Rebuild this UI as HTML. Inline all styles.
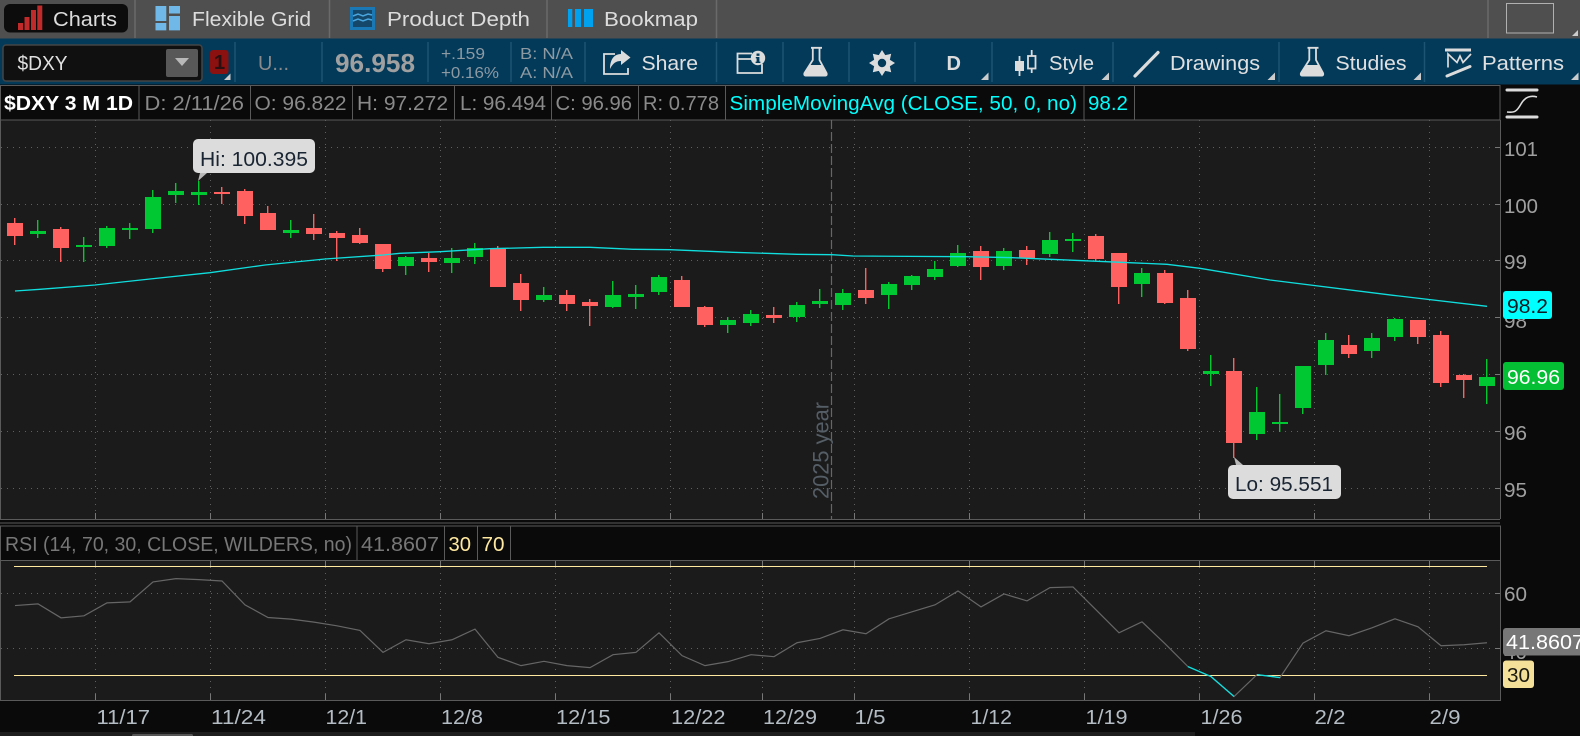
<!DOCTYPE html>
<html><head><meta charset="utf-8"><title>Charts</title>
<style>
html,body{margin:0;padding:0;background:#0a0a0a;width:1580px;height:736px;overflow:hidden}
svg{display:block}
text{font-family:"Liberation Sans",sans-serif;font-size:20px;white-space:pre}
.h{fill:#dcdcdc}
.t{fill:#e0e0e0}
.g{fill:#8a8a8a}
.a{fill:#a0a0a0}
.b{fill:#b4bcc4}
</style></head><body>
<svg width="1580" height="736" viewBox="0 0 1580 736" xmlns="http://www.w3.org/2000/svg">
<rect width="1580" height="736" fill="#0a0a0a"/>
<!-- top tabs -->
<rect width="1580" height="38.5" fill="#4f4f4f"/>
<path d="M135 0V38M329.5 0V38M547 0V38M716.5 0V38M1488 0V38" stroke="#6a6a6a" stroke-width="1.5"/>
<rect x="4" y="4" width="124" height="28.5" rx="6" fill="#0c0c0c"/>
<path fill="#c02a2a" d="M18 23h5v7h-5zM24.5 17h5v13h-5zM31 10h5v20h-5zM37.3 5.5h5v24.5h-5z"/>
<text class="h" x="53" y="26" textLength="64" lengthAdjust="spacingAndGlyphs">Charts</text>
<path fill="#70b8e8" d="M155.5 6h10.8v15h-10.8zM155.5 23h10.8v7.4h-10.8zM169 6h11v7.5h-11zM169 16h11v14.4h-11z"/>
<text class="h" x="192" y="26" textLength="119" lengthAdjust="spacingAndGlyphs">Flexible Grid</text>
<rect x="350" y="7" width="25" height="23" fill="#1a78b4"/>
<rect x="353" y="10" width="19" height="17" fill="#15476a"/>
<path d="M353 16l5-2 5 2 5-2 4 1M353 21l5-2 5 2 5-2 4 1" fill="none" stroke="#4aa6de" stroke-width="1.5"/>
<text class="h" x="387" y="26" textLength="143" lengthAdjust="spacingAndGlyphs">Product Depth</text>
<path fill="#00a2f0" d="M568 9h4.3v18h-4.3zM575 9h6v18h-6zM584 9h9v18h-9z"/>
<text class="h" x="604" y="26" textLength="94" lengthAdjust="spacingAndGlyphs">Bookmap</text>
<rect x="1506.5" y="3.5" width="47" height="29.5" fill="none" stroke="#b0b0b0" stroke-width="1"/>
<path fill="#ccc" d="M1572 36h6v-6z"/>
<!-- toolbar -->
<rect y="38.5" width="1580" height="46" fill="#033a5a"/>
<path d="M235 42V82M322 42V82M428 42V82M511 42V82M585 42V82M716.5 42V82M783 42V82M849 42V82M915 42V82M992 42V82M1113 42V82M1279 42V82M1424.5 42V82" stroke="#1d5373" stroke-width="1.5"/>
<rect x="3" y="45" width="199" height="36" rx="3" fill="#101010" stroke="#444" stroke-width="1.5"/>
<text class="t" x="17.5" y="70" textLength="50" lengthAdjust="spacingAndGlyphs">$DXY</text>
<rect x="166" y="49" width="32" height="28" rx="2" fill="#585858"/>
<path d="M175 58h14l-7 8z" fill="#b8b8b8"/>
<rect x="210" y="50" width="18.5" height="24" rx="3" fill="#8b1010"/>
<text x="214" y="69" fill="#2a1010" style="font-size:20px;font-weight:bold">1</text>
<path fill="#ccc" d="M224 80h6.5v-6.5z"/>
<text x="258" y="70" class="g" textLength="31" lengthAdjust="spacingAndGlyphs">U...</text>
<text x="335" y="72" style="font-size:26px;font-weight:bold" fill="#a0a0a0" textLength="80" lengthAdjust="spacingAndGlyphs">96.958</text>
<text x="441" y="59" style="font-size:16px" fill="#8e9aa2" textLength="44" lengthAdjust="spacingAndGlyphs">+.159</text>
<text x="441" y="78" style="font-size:16px" fill="#8e9aa2" textLength="58" lengthAdjust="spacingAndGlyphs">+0.16%</text>
<text x="520" y="59" style="font-size:16px" fill="#8e9aa2" textLength="53" lengthAdjust="spacingAndGlyphs">B: N/A</text>
<text x="520" y="78" style="font-size:16px" fill="#8e9aa2" textLength="53" lengthAdjust="spacingAndGlyphs">A: N/A</text>
<!-- share -->
<path d="M615 54H604V74H628V68" fill="none" stroke="#dcdcdc" stroke-width="1.8"/>
<path d="M630.5 57.5L621 50V54C613 54 610 61 610 69C613 63 616 61 621 61V65Z" fill="#dcdcdc"/>
<text class="t" x="641.5" y="70" textLength="56.5" lengthAdjust="spacingAndGlyphs">Share</text>
<!-- info window -->
<path d="M752 53.5H737.5V73H762V64M737.5 59H751" fill="none" stroke="#dcdcdc" stroke-width="1.8"/>
<circle cx="758" cy="58" r="7.2" fill="#dcdcdc"/>
<path d="M756.5 53.5h3v2.4h-3zM755.8 57h3.6v4.6h1v1.4h-4.8v-1.4h1v-3.2h-.8z" fill="#033a5a"/>
<!-- flask -->
<path d="M811 47.8h11M812.8 48V60L804.5 73Q803.5 75.5 806 75.5H825Q827.5 75.5 826.5 73L819.5 60V48" fill="none" stroke="#dcdcdc" stroke-width="1.8"/>
<path d="M809.5 65H821.8L827 74Q827.5 76.5 825 76.5H806Q803.5 76.5 804 74Z" fill="#dcdcdc"/>
<!-- gear -->
<polygon transform="translate(882,63)" fill="#dcdcdc" points="0,-13 3.25,-7.85 9.2,-9.2 7.85,-3.25 13,0 7.85,3.25 9.2,9.2 3.25,7.85 0,13 -3.25,7.85 -9.2,9.2 -7.85,3.25 -13,0 -7.85,-3.25 -9.2,-9.2 -3.25,-7.85"/>
<circle cx="882" cy="63" r="4.2" fill="#033a5a"/>
<text x="946.5" y="70" style="font-size:20px;font-weight:bold" fill="#dcdcdc">D</text>
<path fill="#ccc" d="M981 80h7.5v-7.5z"/>
<!-- style -->
<path d="M1019.5 56V76" stroke="#dcdcdc" stroke-width="1.8"/>
<rect x="1015" y="61" width="9" height="10" fill="#dcdcdc"/>
<path d="M1031.7 50V56M1031.7 68.5V73" stroke="#dcdcdc" stroke-width="1.8"/>
<rect x="1028" y="56" width="7.5" height="12.5" fill="none" stroke="#dcdcdc" stroke-width="1.8"/>
<text class="t" x="1049" y="70" textLength="45" lengthAdjust="spacingAndGlyphs">Style</text>
<path fill="#ccc" d="M1101.5 80h7.5v-7.5z"/>
<!-- drawings -->
<path d="M1135 76L1158 52.5" stroke="#dcdcdc" stroke-width="3.2" stroke-linecap="round"/>
<text class="t" x="1170" y="70" textLength="90" lengthAdjust="spacingAndGlyphs">Drawings</text>
<path fill="#ccc" d="M1267.5 80h7.5v-7.5z"/>
<!-- studies -->
<g transform="translate(496.5,0)">
<path d="M811 47.8h11M812.8 48V60L804.5 73Q803.5 75.5 806 75.5H825Q827.5 75.5 826.5 73L819.5 60V48" fill="none" stroke="#dcdcdc" stroke-width="1.8"/>
<path d="M809.5 65H821.8L827 74Q827.5 76.5 825 76.5H806Q803.5 76.5 804 74Z" fill="#dcdcdc"/>
</g>
<text class="t" x="1335.5" y="70" textLength="71" lengthAdjust="spacingAndGlyphs">Studies</text>
<path fill="#ccc" d="M1413.5 80h7.5v-7.5z"/>
<!-- patterns -->
<path d="M1445 50H1471" stroke="#dcdcdc" stroke-width="3"/>
<path d="M1448 67.5V54L1457 62.5L1460 56L1463 62.5L1471 54" fill="none" stroke="#dcdcdc" stroke-width="1.7"/>
<path d="M1447 76L1470 66.5" stroke="#dcdcdc" stroke-width="3" stroke-linecap="round"/>
<text class="t" x="1482" y="70" textLength="82" lengthAdjust="spacingAndGlyphs">Patterns</text>
<path fill="#ccc" d="M1571 80h7.5v-7.5z"/>
<!-- title row -->
<rect x="0.5" y="85.5" width="1499.5" height="34.5" fill="#0a0a0a" stroke="#5a5a5a"/>
<path d="M139 85V120M250.5 85V120M352.5 85V120M454.5 85V120M551.5 85V120M638.5 85V120M725.5 85V120M1084 85V120M1134.5 85V120" stroke="#5a5a5a"/>
<text x="4" y="110" style="font-size:20px;font-weight:bold" fill="#fff" textLength="129" lengthAdjust="spacingAndGlyphs">$DXY 3 M 1D</text>
<text class="g" x="144.5" y="110" textLength="99.5" lengthAdjust="spacingAndGlyphs">D: 2/11/26</text>
<text class="g" x="254.5" y="110" textLength="92" lengthAdjust="spacingAndGlyphs">O: 96.822</text>
<text class="g" x="357" y="110" textLength="91" lengthAdjust="spacingAndGlyphs">H: 97.272</text>
<text class="g" x="460" y="110" textLength="86" lengthAdjust="spacingAndGlyphs">L: 96.494</text>
<text class="g" x="555.5" y="110" textLength="76.5" lengthAdjust="spacingAndGlyphs">C: 96.96</text>
<text class="g" x="643" y="110" textLength="76" lengthAdjust="spacingAndGlyphs">R: 0.778</text>
<text x="729.5" y="110" fill="#00ffff" textLength="347.5" lengthAdjust="spacingAndGlyphs">SimpleMovingAvg (CLOSE, 50, 0, no)</text>
<text x="1088" y="110" fill="#00ffff" textLength="40" lengthAdjust="spacingAndGlyphs">98.2</text>
<path d="M1507 90H1537M1507 117H1537" stroke="#dcdcdc" stroke-width="3" stroke-linecap="round"/>
<path d="M1507 112C1515 113 1517 111 1521 104C1525 97 1530 95 1537 97" fill="none" stroke="#dcdcdc" stroke-width="1.6"/>
<!-- main chart -->
<rect x="1" y="120.5" width="1499" height="398.5" fill="#1b1b1b"/>
<path d="M.5 120V519M1500.5 120V519M0 519.5H1500M0 523H1500" stroke="#5a5a5a"/>
<g fill="none" stroke="#606060" stroke-width="1" stroke-dasharray="1 5">
<path d="M1 147.5H1495M1 204.5H1495M1 260.5H1495M1 317.5H1495M1 374.5H1495M1 431.5H1495M1 488.5H1495"/>
<path d="M95.5 120V513M210.5 120V513M325.5 120V513M440.5 120V513M555.5 120V513M670.5 120V513M762.5 120V513M854.5 120V513M969.5 120V513M1084.5 120V513M1199.5 120V513M1314.5 120V513M1429.5 120V513"/>
</g>
<path d="M95.5 513V519M210.5 513V519M325.5 513V519M440.5 513V519M555.5 513V519M670.5 513V519M762.5 513V519M854.5 513V519M969.5 513V519M1084.5 513V519M1199.5 513V519M1314.5 513V519M1429.5 513V519M1495 147.5H1500M1495 204.5H1500M1495 260.5H1500M1495 317.5H1500M1495 374.5H1500M1495 431.5H1500M1495 488.5H1500" stroke="#777" fill="none"/>
<path d="M831.5 120V519" stroke="#666" stroke-width="1.2" stroke-dasharray="9 3"/>
<text transform="translate(828.5,499) rotate(-90)" x="0" y="0" fill="#555e66" style="font-size:22px" textLength="97" lengthAdjust="spacingAndGlyphs">2025 year</text>
<!-- candles: wicks -->
<g transform="translate(-.3,0)" fill="none" stroke-width="1.4">
<path stroke="#00c832" d="M38 220V238M84 237V262M107 226V248M130 223V239M153 190V233M176 183V203M199 181V205M291 220V238M406 256V275M452 248V273M475 243V264M544 287V302M613 281V308M636 285V309M659 275V295M728 317V333M751 310V326M797 302V322M820 289V308M843 289V310M889 282V309M912 275V290M935 261V280M958 245V267M1004 248V270M1050 232V257M1073 233V252M1142 268V297M1211 355V386M1257 387V440M1280 394V432M1303 366V414M1326 333V375M1372 333V358M1395 318V341M1487 359V404"/>
<path stroke="#ff6060" d="M15 218V245M61 227V262M222 187V204M245 189V224M268 206V230M314 214V240M337 231V261M360 228V244M383 244V272M429 253V272M498 246V287M521 274V311M567 290V311M590 299V326M682 276V307M705 306V327M774 307V323M866 268V304M981 246V280M1027 246V265M1096 234V261M1119 253V304M1165 270V304M1188 290V351M1234 358V458M1349 335V358M1418 320V344M1441 331V387M1464 374V398"/>
</g>
<!-- candles: bodies -->
<path fill="#00c832" d="M30 231h16v3h-16zM76 245h16v2h-16zM99 228h16v18h-16zM122 228h16v2h-16zM145 197h16v32h-16zM168 191h16v4h-16zM191 192h16v3h-16zM283 230h16v3h-16zM398 257h16v9h-16zM444 258h16v5h-16zM467 248h16v9h-16zM536 295h16v5h-16zM605 295h16v12h-16zM628 294h16v3h-16zM651 277h16v15h-16zM720 320h16v5h-16zM743 314h16v9h-16zM789 305h16v12h-16zM812 301h16v3h-16zM835 293h16v12h-16zM881 284h16v11h-16zM904 276h16v9h-16zM927 269h16v8h-16zM950 253h16v13h-16zM996 251h16v15h-16zM1042 240h16v14h-16zM1065 239h16v2h-16zM1134 273h16v11h-16zM1203 371h16v3h-16zM1249 412h16v22h-16zM1272 422h16v2h-16zM1295 366h16v42h-16zM1318 340h16v25h-16zM1364 338h16v13h-16zM1387 319h16v18h-16zM1479 377h16v9h-16z"/>
<path fill="#ff6060" d="M7 223h16v13h-16zM53 229h16v19h-16zM214 192h16v2h-16zM237 191h16v25h-16zM260 213h16v17h-16zM306 228h16v6h-16zM329 233h16v5h-16zM352 235h16v8h-16zM375 244h16v25h-16zM421 258h16v4h-16zM490 249h16v38h-16zM513 283h16v17h-16zM559 295h16v9h-16zM582 302h16v4h-16zM674 280h16v27h-16zM697 307h16v18h-16zM766 315h16v3h-16zM858 290h16v8h-16zM973 251h16v16h-16zM1019 250h16v8h-16zM1088 236h16v23h-16zM1111 253h16v34h-16zM1157 273h16v30h-16zM1180 298h16v51h-16zM1226 371h16v72h-16zM1341 345h16v9h-16zM1410 320h16v17h-16zM1433 335h16v48h-16zM1456 375h16v5h-16z"/>
<!-- SMA -->
<polyline fill="none" stroke="#10dede" stroke-width="1.3" points="15,291 40,289.3 95,285 150,279 210,272.7 265,265 325,259 383,255 400,253.3 440,251.7 490,248.7 543,247.3 590,247.3 633,249.3 670,249.7 733,252.3 797,254.3 832,254.7 853,256 967,256.7 1013,257.7 1083,260.7 1167,264.3 1200,268.3 1270,280 1393,295.3 1487,306.3"/>
<!-- bubbles -->
<path d="M198 181L200 173H207Z" fill="#b8b8b8"/>
<rect x="193" y="139" width="122" height="34" rx="5" fill="#dcdcdc"/>
<text x="200" y="166" fill="#1a2533" textLength="108" lengthAdjust="spacingAndGlyphs">Hi: 100.395</text>
<path d="M1234 457L1236 465H1243Z" fill="#b8b8b8"/>
<rect x="1228" y="465" width="113" height="34" rx="5" fill="#dcdcdc"/>
<text x="1235" y="491" fill="#1a2533" textLength="98" lengthAdjust="spacingAndGlyphs">Lo: 95.551</text>
<!-- right axis -->
<text class="a" x="1504" y="156" textLength="34" lengthAdjust="spacingAndGlyphs">101</text>
<text class="a" x="1504" y="213" textLength="34" lengthAdjust="spacingAndGlyphs">100</text>
<text class="a" x="1504" y="269" textLength="23" lengthAdjust="spacingAndGlyphs">99</text>
<text class="a" x="1504" y="328" textLength="23" lengthAdjust="spacingAndGlyphs">98</text>
<text class="a" x="1504" y="440" textLength="23" lengthAdjust="spacingAndGlyphs">96</text>
<text class="a" x="1504" y="497" textLength="23" lengthAdjust="spacingAndGlyphs">95</text>
<rect x="1503" y="291" width="49" height="28" rx="3" fill="#00ffff"/>
<text x="1507" y="313" fill="#0a1a22" textLength="41" lengthAdjust="spacingAndGlyphs">98.2</text>
<rect x="1503" y="362" width="61" height="28" rx="3" fill="#04bf33"/>
<text x="1507" y="384" fill="#fff" textLength="53" lengthAdjust="spacingAndGlyphs">96.96</text>
<!-- RSI -->
<rect x=".5" y="526" width="1500" height="34.5" fill="#0a0a0a" stroke="#5a5a5a"/>
<path d="M357 526V560M444.5 526V560M477.5 526V560M510.5 526V560" stroke="#5a5a5a"/>
<text x="5" y="551" fill="#777" textLength="347" lengthAdjust="spacingAndGlyphs">RSI (14, 70, 30, CLOSE, WILDERS, no)</text>
<text x="361" y="551" fill="#777" textLength="78" lengthAdjust="spacingAndGlyphs">41.8607</text>
<text x="448.5" y="551" fill="#ffe9a0" textLength="22.5" lengthAdjust="spacingAndGlyphs">30</text>
<text x="481.5" y="551" fill="#ffe9a0" textLength="23" lengthAdjust="spacingAndGlyphs">70</text>
<rect x=".5" y="560.5" width="1500" height="140" fill="#1b1b1b" stroke="#5a5a5a"/>
<g fill="none" stroke="#606060" stroke-width="1" stroke-dasharray="1 5">
<path d="M1 593.5H1495M1 648.5H1495"/>
<path d="M95.5 561V694M210.5 561V694M325.5 561V694M440.5 561V694M555.5 561V694M670.5 561V694M762.5 561V694M854.5 561V694M969.5 561V694M1084.5 561V694M1199.5 561V694M1314.5 561V694M1429.5 561V694"/>
</g>
<path d="M95.5 694V700M210.5 694V700M325.5 694V700M440.5 694V700M555.5 694V700M670.5 694V700M762.5 694V700M854.5 694V700M969.5 694V700M1084.5 694V700M1199.5 694V700M1314.5 694V700M1429.5 694V700M95.5 561V566M210.5 561V566M325.5 561V566M440.5 561V566M555.5 561V566M670.5 561V566M762.5 561V566M854.5 561V566M969.5 561V566M1084.5 561V566M1199.5 561V566M1314.5 561V566M1429.5 561V566M1495 593.5H1500M1495 648.5H1500" stroke="#777" fill="none"/>
<path d="M14 566.5H1487M14 675.5H1487" stroke="#ffe9a0" stroke-width="1" fill="none"/>
<g transform="translate(0,515.9) scale(1,.332)">
<polyline fill="none" stroke="#666" stroke-width="1.2" vector-effect="non-scaling-stroke" points="15,270 38,265 61,307 84,301 107,262 130,259 153,199 176,189 199,192 222,196 245,268 268,306 291,311 314,320 337,331 360,345 383,411 406,373 429,385 452,373 475,341 498,426 521,451 544,438 567,451 590,457 613,418 636,411 659,352 682,421 705,451 728,439 751,418 774,424 797,382 820,369 843,343 866,355 889,310 912,289 935,268 958,226 981,274 1004,235 1027,256 1050,216 1073,214 1096,283 1119,352 1142,319 1165,385 1188,454 1211,484 1234,544 1257,478 1280,487 1303,383 1326,346 1349,361 1372,337 1395,310 1418,334 1441,391 1464,388 1487,382"/>
<polyline fill="none" stroke="#10e0e0" stroke-width="1.3" vector-effect="non-scaling-stroke" points="1188,454 1211,484 1234,544"/>
<polyline fill="none" stroke="#10e0e0" stroke-width="1.3" vector-effect="non-scaling-stroke" points="1257,478 1280,487"/>
</g>
<text class="a" x="1504" y="601" textLength="23" lengthAdjust="spacingAndGlyphs">60</text>
<text class="a" x="1504" y="659" textLength="23" lengthAdjust="spacingAndGlyphs">40</text>
<rect x="1503" y="628" width="90" height="27.5" rx="3" fill="#777"/>
<text x="1506" y="649" fill="#fff" textLength="78" lengthAdjust="spacingAndGlyphs">41.8607</text>
<rect x="1503" y="660.5" width="31" height="27.5" rx="3" fill="#f5e09a"/>
<text x="1507" y="682" fill="#1a1a10" textLength="23" lengthAdjust="spacingAndGlyphs">30</text>
<!-- x axis -->
<text class="b" x="96.5" y="724" textLength="53.5" lengthAdjust="spacingAndGlyphs">11/17</text>
<text class="b" x="211" y="724" textLength="55" lengthAdjust="spacingAndGlyphs">11/24</text>
<text class="b" x="325.5" y="724" textLength="41.5" lengthAdjust="spacingAndGlyphs">12/1</text>
<text class="b" x="441" y="724" textLength="42" lengthAdjust="spacingAndGlyphs">12/8</text>
<text class="b" x="556" y="724" textLength="54.5" lengthAdjust="spacingAndGlyphs">12/15</text>
<text class="b" x="671" y="724" textLength="54.5" lengthAdjust="spacingAndGlyphs">12/22</text>
<text class="b" x="763" y="724" textLength="54" lengthAdjust="spacingAndGlyphs">12/29</text>
<text class="b" x="854.5" y="724" textLength="31" lengthAdjust="spacingAndGlyphs">1/5</text>
<text class="b" x="970.5" y="724" textLength="41.5" lengthAdjust="spacingAndGlyphs">1/12</text>
<text class="b" x="1085.5" y="724" textLength="42" lengthAdjust="spacingAndGlyphs">1/19</text>
<text class="b" x="1200.5" y="724" textLength="42" lengthAdjust="spacingAndGlyphs">1/26</text>
<text class="b" x="1314.5" y="724" textLength="31" lengthAdjust="spacingAndGlyphs">2/2</text>
<text class="b" x="1429.5" y="724" textLength="31" lengthAdjust="spacingAndGlyphs">2/9</text>
<rect x="0" y="732" width="1195" height="4" fill="#1e1e1e"/>
<rect x="132" y="734" width="61" height="3" rx="1.5" fill="#555"/>
</svg>
</body></html>
